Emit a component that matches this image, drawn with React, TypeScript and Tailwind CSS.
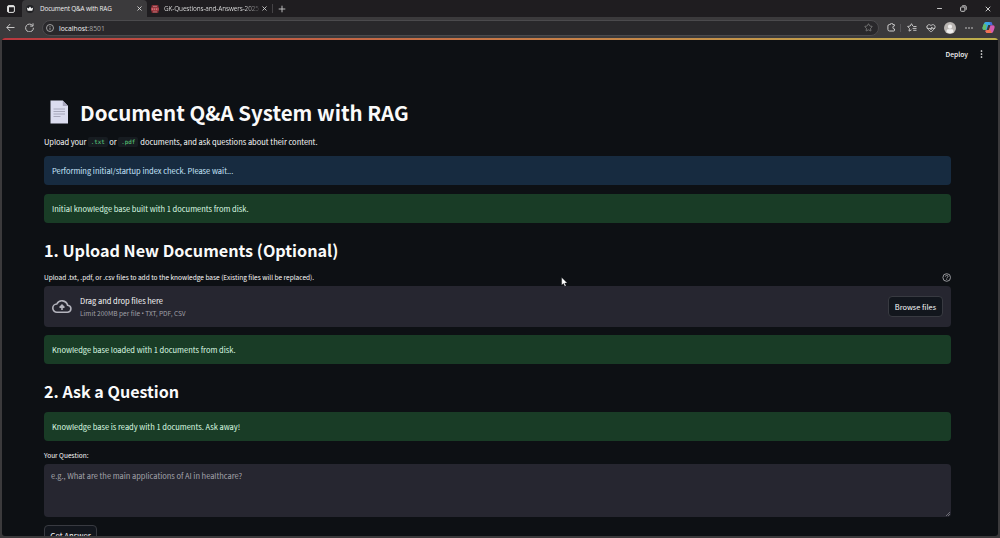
import type { ReactNode } from "react";
import { Minus, X, Plus, Star, HeartPulse } from "lucide-react";

function Alert({ children, info = false }: { children: ReactNode; info?: boolean }) {
  return (
    <div
      className={
        "flex h-[29px] shrink-0 items-center rounded-[4px] px-2 text-[7.49px] " +
        (info ? "bg-[#172b40] text-[#c9e8ff]" : "bg-[#193c26] text-[#defce5]")
      }
    >
      {children}
    </div>
  );
}

function Code({ children }: { children: ReactNode }) {
  return (
    <code className="inline-flex h-[10px] w-[20px] items-center justify-center rounded-[2px] bg-[#171c21] align-middle font-['DejaVu_Sans_Mono',monospace] text-[5.9px] leading-[10px] text-[#5fd47f]">
      {children}
    </code>
  );
}

function TabStrip() {
  return (
    <div className="flex h-[17px] shrink-0 items-center bg-[#1f1d20] font-['Open_Sans',sans-serif]">
      <div className="flex w-[22px] justify-center">
        <svg width="8" height="8" viewBox="0 0 8 8" fill="none" stroke="#e3e3e3">
          <rect x="0.6" y="0.6" width="6.8" height="6.8" rx="1.4" />
          <path d="M0.7 1.5h6.6M1.3 1v6" strokeWidth="1.4" />
        </svg>
      </div>
      <div className="flex h-full w-[125px] items-center rounded-t-[4px] bg-[#3b3a3c] pl-[4px] pr-[4px]">
        <svg width="8" height="8" viewBox="0 0 8 8">
          <circle cx="4" cy="4" r="4" fill="#202124" />
          <path d="M0.8 2.5 2.5 3.5 4 1.5 5.5 3.5 7.2 2.5 6.3 5.8H1.7Z" fill="#f2f2f2" />
        </svg>
        <span className="ml-[6px] flex-1 whitespace-nowrap text-[6.4px] tracking-[-0.17px] text-[#eeeeee]">Document Q&amp;A with RAG</span>
        <X size={7} strokeWidth={3} color="#dddddd" />
      </div>
      <div className="flex h-full w-[125px] items-center pl-[4px] pr-[4px]">
        <svg width="8" height="8" viewBox="0 0 8 8">
          <rect x="0.5" y="0" width="7" height="8" rx="1" fill="#872f36" />
          <path d="M0 2.6h8v3H0z" fill="#b04149" />
          <path d="M1.4 3.3v1.8M3.4 3.3v1.8M5.5 3.3v1.8M2 1.4h4M2 6.9h4" stroke="#d9a0a2" strokeWidth="0.6" />
        </svg>
        <span className="ml-[5px] whitespace-nowrap bg-gradient-to-r from-[#e6e6e6] from-85% to-[#4a484b] bg-clip-text text-[6.4px] tracking-[-0.12px] text-transparent">
          GK-Questions-and-Answers-2025
        </span>
        <span className="flex-1" />
        <X size={7} strokeWidth={3} color="#d0d0d0" />
      </div>
      <div className="h-[9px] w-px bg-[#454346]" />
      <Plus className="ml-[4px]" size={10} strokeWidth={2.2} color="#c8c8c8" />
      <div className="flex flex-1 items-center justify-end pr-[8px]">
        <Minus size={7} strokeWidth={3} color="#dddddd" />
        <svg className="ml-[17px]" width="7" height="7" viewBox="0 0 7 7" fill="none" stroke="#dddddd" strokeWidth="0.9">
          <rect x="0.6" y="2" width="4.3" height="4.3" rx="0.8" />
          <path d="M2.2 0.8h3c.7 0 1 .4 1 1v3" />
        </svg>
        <X className="ml-[17px]" size={8} strokeWidth={2.6} color="#e4e4e4" />
      </div>
    </div>
  );
}

function Toolbar() {
  return (
    <div className="flex h-[21px] shrink-0 items-center bg-[#3b3a3c] pl-[6px] pr-[5px]">
      <svg width="9" height="9" viewBox="0 0 9 9" fill="none" stroke="#c6c6c6" strokeWidth="1">
        <path d="M8.5 4.5H0.8M4.2 1 0.8 4.5 4.2 8" />
      </svg>
      <svg className="ml-[10px]" width="9" height="9" viewBox="0 0 9 9" fill="none" stroke="#c6c6c6" strokeWidth="1">
        <path d="M7.6 2.6A3.9 3.9 0 1 0 8.4 4.8M8 0.3v2.8H5.2" />
      </svg>
      <div className="ml-[8px] flex h-[16px] w-[837px] items-center rounded-full border border-[#4b4a4d] bg-[#29282b] pl-[3px] pr-[5px]">
        <svg width="8" height="8" viewBox="0 0 8 8" fill="none" stroke="#bdbdbd" strokeWidth="0.8">
          <circle cx="4" cy="4" r="3.5" />
          <path d="M4 3.6v2.2M4 2v.8" />
        </svg>
        <span className="ml-[5px] flex-1 pt-[2px] font-['Open_Sans',sans-serif] text-[6.8px] leading-[10px] text-[#f2f2f2]">
          localhost<span className="text-[#a6a6a6]">:8501</span>
        </span>
        <Star size={9} strokeWidth={1.8} color="#929292" />
      </div>
      <svg className="ml-[8px]" width="9" height="9" viewBox="0 0 9 9" fill="none" stroke="#d0d0d0" strokeWidth="1">
        <path d="M2.3 1.5h1.1a1.2 1.2 0 0 1 2.4 0h1.1a.6.6 0 0 1 .6.6v.7a1.6 1.6 0 0 0 0 3.2v1.2a.7.7 0 0 1-.7.8H2.5A1.6 1.6 0 0 1 .9 6.4V3.1a1.6 1.6 0 0 1 1.4-1.6Z" />
      </svg>
      <div className="ml-[4px] h-[8px] w-px bg-[#555457]" />
      <svg className="ml-[6px]" width="10" height="9" viewBox="0 0 10 9" fill="none" stroke="#d0d0d0" strokeWidth="0.9">
        <path d="M5.8 3 4.5.7 3.2 3 .6 3.5l1.9 1.9L2 8.1l2.5-1.2M6.2 3.5h3.3M5.6 5.4h3.9M6.2 7.3h3.3" />
      </svg>
      <HeartPulse className="ml-[9px]" size={10} strokeWidth={2.1} color="#d0d0d0" />
      <svg className="ml-[8px]" width="12" height="12" viewBox="0 0 12 12">
        <circle cx="6" cy="6" r="6" fill="#b9b5b2" />
        <circle cx="6" cy="4.7" r="2.1" fill="#f0efee" />
        <path d="M2.6 10.2V9c0-1.2.8-1.8 1.8-1.8h3.2c1 0 1.8.6 1.8 1.8v1.2A5.4 5.4 0 0 1 6 11.3a5.4 5.4 0 0 1-3.4-1.1Z" fill="#f0efee" />
      </svg>
      <svg className="ml-[9px]" width="8" height="2" viewBox="0 0 8 2" fill="#d3d3d3">
        <circle cx="1" cy="1" r="0.8" /><circle cx="4" cy="1" r="0.8" /><circle cx="7" cy="1" r="0.8" />
      </svg>
      <svg className="ml-auto" width="13" height="13" viewBox="0 0 13 13">
        <path d="M4.8 1h3.5c1.4 0 1.5 1 2 2.2L8 4H6.2L4.6 9H2.2C.8 9 .3 7.7.7 6.3L1.9 2.7C2.4 1.3 3.3 1 4.8 1Z" fill="#38a9e5" />
        <path d="M.6 6.2 2 2.4 4.7 4 3.8 9H2.2C.8 9 .3 7.7.6 6.2Z" fill="#65bd6c" />
        <path d="m7.7 1 .9 3.3H11c1.4 0 1.9 1.3 1.5 2.6l-1.1 3.3c-.5 1.3-1.3 1.8-2.7 1.8H5.3c-1.3 0-1.6-1-2-2.2L5.6 9h1.3l1.7-5Z" fill="#d75bb1" />
        <path d="M3.3 9.8 5.5 9h1.4l.6-1.8L9.8 12H5.3c-1.3 0-1.6-1-2-2.2Z" fill="#ef7350" />
        <path d="M7.5 1h.8c1.4 0 1.5 1 2 2.2l.4 1.1H8.5Z" fill="#4a66d9" />
      </svg>
    </div>
  );
}

export default function App() {
  return (
    <div className="relative flex h-[538px] w-[1000px] flex-col overflow-hidden bg-[#3b3a3c] font-['Noto_Sans_CJK_SC','Open_Sans',sans-serif] text-[#fafafa]">
      <TabStrip />
      <Toolbar />
      <main className="mx-[2px] flex h-[498px] w-[996px] flex-col overflow-hidden rounded-[3px] bg-[#0d1014]">
        <div className="h-[2px] shrink-0 bg-gradient-to-r from-[#b9383f] via-[#c77847] to-[#bdb04d]" />
        <header className="flex h-[28px] shrink-0 items-center justify-end pr-[15px] text-[6.7px] font-medium leading-[10px]">
          <span>Deploy</span>
          <svg className="ml-[12px]" width="3" height="8" viewBox="0 0 3 8" fill="#fafafa">
            <circle cx="1.5" cy="1" r="0.85" /><circle cx="1.5" cy="4" r="0.85" /><circle cx="1.5" cy="7" r="0.85" />
          </svg>
        </header>
        <section className="flex w-[949px] shrink-0 flex-col pl-[42px] pt-[27px]">
          <h1 className="flex h-[34px] items-center whitespace-nowrap text-[20.5px] font-bold leading-[34px]">
            <svg className="ml-[6px] mr-[11px]" width="19" height="24" viewBox="0 0 19 24">
              <path d="M.5.5h12.3L18 6v17.5H.5Z" fill="#dbdcef" />
              <path d="M12.8.5V6H18Z" fill="#a7a6bd" />
              <path d="M3.5 9H15M3.5 11.5H15M3.5 14H15M3.5 16.5h7" stroke="#9b9aae" strokeWidth="0.8" />
            </svg>
            Document Q&amp;A System with RAG
          </h1>
          <p className="mt-[7px] flex h-[12px] items-center gap-[1.5px] whitespace-nowrap text-[7.49px] leading-[12px]">
            <span className="tracking-[-0.06px]">Upload your</span>
            <Code>.txt</Code>
            <span>or</span>
            <Code>.pdf</Code>
            <span className="ml-[0.5px]">documents, and ask questions about their content.</span>
          </p>
          <div className="mt-[8px] flex flex-col gap-[9px]">
            <Alert info>Performing initial/startup index check. Please wait...</Alert>
            <Alert>Initial knowledge base built with 1 documents from disk.</Alert>
          </div>
          <h2 className="mt-[13px] h-[28px] whitespace-nowrap text-[16.2px] font-bold leading-[28px] tracking-[-0.01px]">1. Upload New Documents (Optional)</h2>
          <div className="mt-[7px] flex h-[12px] items-center justify-between text-[6.54px] leading-[12px]">
            <span>Upload .txt, .pdf, or .csv files to add to the knowledge base (Existing files will be replaced).</span>
            <svg width="9" height="9" viewBox="0 0 9 9" fill="none" stroke="#a5a6aa" strokeWidth="0.9">
              <circle cx="4.7" cy="4.5" r="3.8" />
              <path d="M3.4 3.6c0-1.7 2.6-1.7 2.6 0 0 .9-1.3.9-1.3 1.9M4.7 6.2v.8" />
            </svg>
          </div>
          <div className="mt-[3px] flex h-[41px] items-center rounded-[4px] bg-[#262630] px-2">
            <svg width="20" height="15" viewBox="0 0 20 15" fill="none" stroke="#b4b4bd" strokeWidth="1.6">
              <path d="M5 13.2h10.2a3.5 3.5 0 0 0 .4-7A5.8 5.8 0 0 0 4.8 5 4.1 4.1 0 0 0 5 13.2Z" />
              <path d="M10 11V6.5M7.6 8.6 10 6.2l2.4 2.4" />
            </svg>
            <div className="ml-[8px] flex-1">
              <div className="text-[7.49px] leading-[13px]">Drag and drop files here</div>
              <div className="text-[6.54px] leading-[12px] text-[#a0a0a8]">
                Limit 200MB per file <span className="font-['Open_Sans',sans-serif] text-[6.5px] tracking-[-0.3px]">•</span> TXT, PDF, CSV
              </div>
            </div>
            <button className="h-[21px] w-[55px] whitespace-nowrap rounded-[4px] border border-[#383a41] bg-[#12161d] text-[7.4px] leading-[18px]">Browse files</button>
          </div>
          <div className="mt-[8px]">
            <Alert>Knowledge base loaded with 1 documents from disk.</Alert>
          </div>
          <h2 className="mt-[13px] h-[28px] text-[16.1px] font-bold leading-[28px]">2. Ask a Question</h2>
          <div className="mt-[7px]">
            <Alert>Knowledge base is ready with 1 documents. Ask away!</Alert>
          </div>
          <div className="mt-[8px] h-[12px] text-[6.54px] leading-[12px]">Your Question:</div>
          <div className="mt-[3px] flex h-[53px] justify-between rounded-[4px] bg-[#262630] pl-[7px] text-[7.49px] leading-[12px] tracking-[-0.02px] text-[#a5a5ac]">
            <span className="mt-[6px]">e.g., What are the main applications of AI in healthcare?</span>
            <svg className="mb-[1px] mr-[1px] self-end" width="4" height="4" viewBox="0 0 4 4" stroke="#9b9ba1" strokeWidth="0.6">
              <path d="M0 4 4 0M2 4 4 2" />
            </svg>
          </div>
          <button className="mt-[8px] h-[21px] w-[53px] whitespace-nowrap rounded-[4px] border border-[#383a41] bg-[#12161d] text-[7.7px] leading-[19px]">Get Answer</button>
        </section>
      </main>
      <svg className="absolute left-[561px] top-[277px]" width="7" height="10" viewBox="0 0 7 10">
        <path d="M.7.5v7.6l1.8-1.6 1.3 2.8 1.2-.6-1.3-2.6h2.5Z" fill="#ffffff" stroke="#202124" strokeWidth="0.3" />
      </svg>
    </div>
  );
}
